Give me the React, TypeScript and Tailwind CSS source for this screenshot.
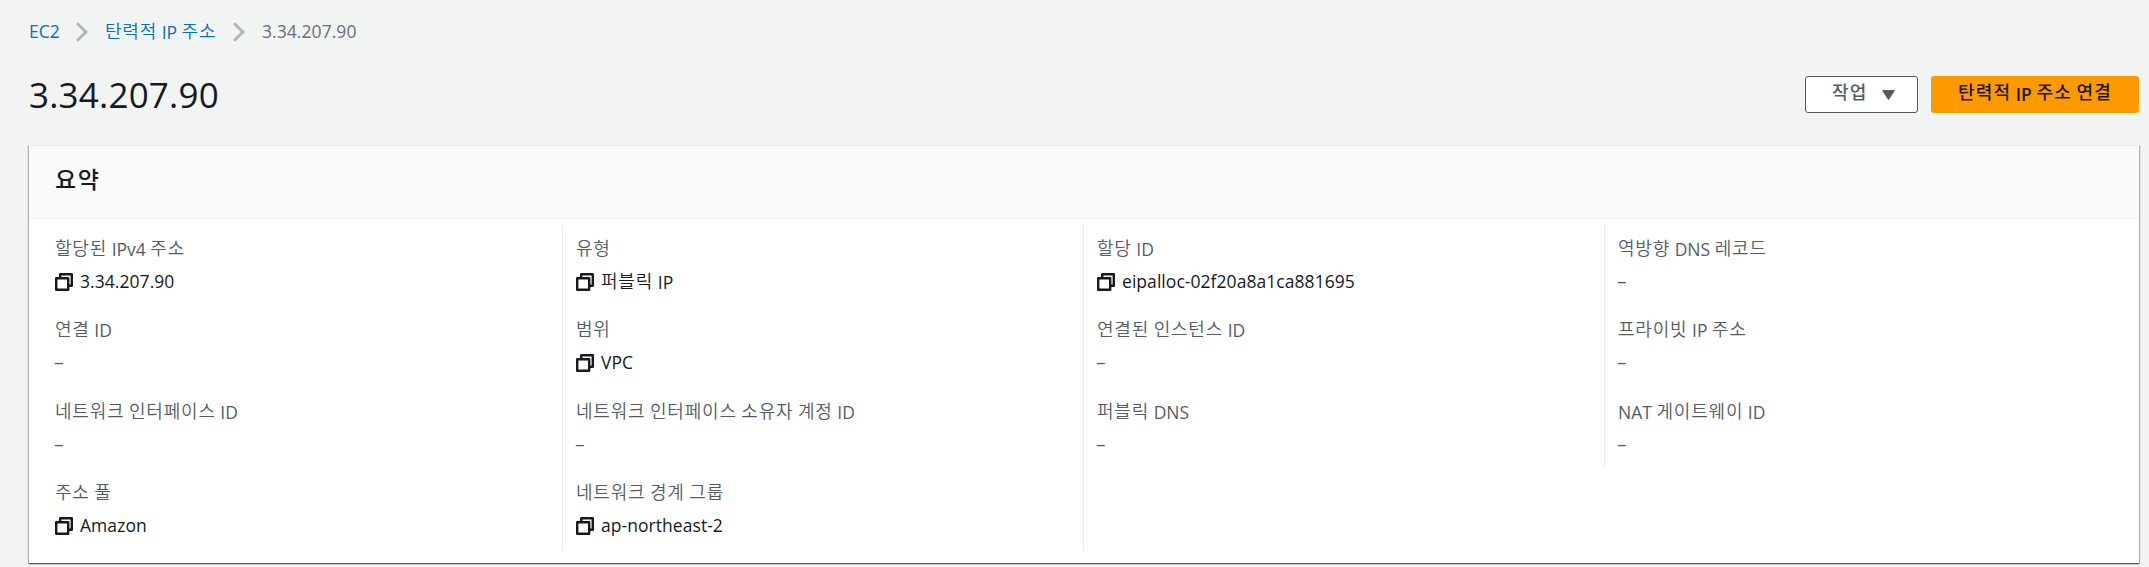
import { Fragment } from 'react';

type Field = { label: string; value?: string };

const columns: Field[][] = [
  [
    { label: '할당된 IPv4 주소', value: '3.34.207.90' },
    { label: '연결 ID' },
    { label: '네트워크 인터페이스 ID' },
    { label: '주소 풀', value: 'Amazon' },
  ],
  [
    { label: '유형', value: '퍼블릭 IP' },
    { label: '범위', value: 'VPC' },
    { label: '네트워크 인터페이스 소유자 계정 ID' },
    { label: '네트워크 경계 그룹', value: 'ap-northeast-2' },
  ],
  [
    { label: '할당 ID', value: 'eipalloc-02f20a8a1ca881695' },
    { label: '연결된 인스턴스 ID' },
    { label: '퍼블릭 DNS' },
  ],
  [
    { label: '역방향 DNS 레코드' },
    { label: '프라이빗 IP 주소' },
    { label: 'NAT 게이트웨이 ID' },
  ],
];

const columnStyles = [
  'w-[533px] shrink-0 pl-[26px]',
  'w-[521px] shrink-0 border-l border-[#eaeded] pl-[13px]',
  'w-[521px] shrink-0 border-l border-[#eaeded] pl-[13px] h-[325px]',
  'w-[521px] shrink-0 border-l border-[#eaeded] pl-[13px]',
];

/** Sets Hangul runs in their own face so they sit well beside Latin text. */
function Mixed({ text, bold = false }: { text: string; bold?: boolean }) {
  const runs = text.split(/([가-힣]+)/).filter(Boolean);
  return (
    <>
      {runs.map((run, i) =>
        /[가-힣]/.test(run) ? (
          <span
            key={i}
            className={
              bold
                ? "relative -top-[2px] font-['Noto_Sans_CJK_KR',sans-serif] text-[18px] font-medium tracking-[1.2px]"
                : "relative -top-px font-['Noto_Sans_CJK_KR',sans-serif] text-[18px] font-[350] tracking-[0.8px]"
            }
          >
            {run}
          </span>
        ) : (
          <Fragment key={i}>{run}</Fragment>
        ),
      )}
    </>
  );
}

function CopyIcon() {
  return (
    <svg className="mr-[7px] mt-[5px] size-[18px] shrink-0" viewBox="0 0 18 18" fill="none" stroke="#16191f" strokeWidth="2.4" strokeLinejoin="round">
      <path d="M1.200 5.200h12v11.600H1.200z" />
      <path d="M5.200 5V1.200h11.600v11.600h-3.600" />
    </svg>
  );
}

function Chevron() {
  return (
    <svg className="mt-[4px] h-[20px] w-[12px] shrink-0" viewBox="0 0 12 20" fill="none" stroke="#aab7b8" strokeWidth="2.800">
      <path d="M1 1.200 10 10l-9 8.800" />
    </svg>
  );
}

export default function App() {
  return (
    <div className="flex h-[567px] w-[2149px] flex-col overflow-hidden bg-[#f2f3f3] pl-[29px] pr-[10px] font-['Open_Sans','Noto_Sans_CJK_KR',sans-serif] text-[17.5px] leading-[27.5px] text-[#16191f]">
      <nav className="flex h-[28px] mt-[18px] items-start whitespace-nowrap text-[#0073bb]">
        <a className="w-[47px]">EC2</a>
        <Chevron />
        <a className="ml-[17px] w-[128px]"><Mixed text="탄력적 IP 주소" /></a>
        <Chevron />
        <span className="ml-[17px] text-[#687078] tracking-[0.06px]">3.34.207.90</span>
      </nav>

      <header className="mt-[29px] flex h-[70px] items-start justify-between">
        <h1 className="mt-[-3px] text-[35px] leading-[45px] tracking-[0.2px]">3.34.207.90</h1>
        <div className="flex gap-[13px] font-semibold">
          <button className="mt-px flex h-[37px] w-[113px] items-center rounded-[3px] border border-[#545b64] bg-white pl-[26px] text-[#545b64]">
            <span><Mixed text="작업" bold /></span>
            <svg className="ml-[14px] h-[10px] w-[13px]" viewBox="0 0 13 10" fill="#545b64">
              <path d="M1 0h11q1 0 .6 1L7.200 9.300q-.7 1-1.400 0L.4 1Q0 0 1 0z" />
            </svg>
          </button>
          <button className="mt-px flex h-[37px] w-[208px] items-center justify-center rounded-[3px] bg-[#ff9900] whitespace-pre">
            <span><Mixed text="탄력적 IP 주소 연결" bold /></span>
          </button>
        </div>
      </header>

      <section className="flex h-[418px] flex-col border-t border-[#eaeded] bg-white shadow-[0_1px_1px_0_rgba(0,28,36,0.5),1px_1px_1px_0_rgba(0,28,36,0.25),-1px_1px_1px_0_rgba(0,28,36,0.25)]">
        <div className="flex h-[73px] shrink-0 items-center border-b border-[#eaeded] bg-[#fafafa] pl-[26px]">
          <h2 className="mt-[-7px] font-['Noto_Sans_CJK_KR',sans-serif] text-[23px] font-medium tracking-[1.5px]">요약</h2>
        </div>
        <div className="flex items-start pt-[6px]">
          {columns.map((fields, c) => (
            <div key={c} className={columnStyles[c]}>
              {fields.map((f) => (
                <dl key={f.label} className="h-[81.25px] pt-[10px] whitespace-nowrap">
                  <dt className="h-[33px] text-[#545b64]"><Mixed text={f.label} /></dt>
                  <dd className="flex h-[28px]">
                    {f.value ? (
                      <>
                        <CopyIcon />
                        <span className="tracking-[0.05px]"><Mixed text={f.value} /></span>
                      </>
                    ) : (
                      <span className="ml-[-1px] text-[19px] font-medium text-[#545b64]">–</span>
                    )}
                  </dd>
                </dl>
              ))}
            </div>
          ))}
        </div>
      </section>
    </div>
  );
}
